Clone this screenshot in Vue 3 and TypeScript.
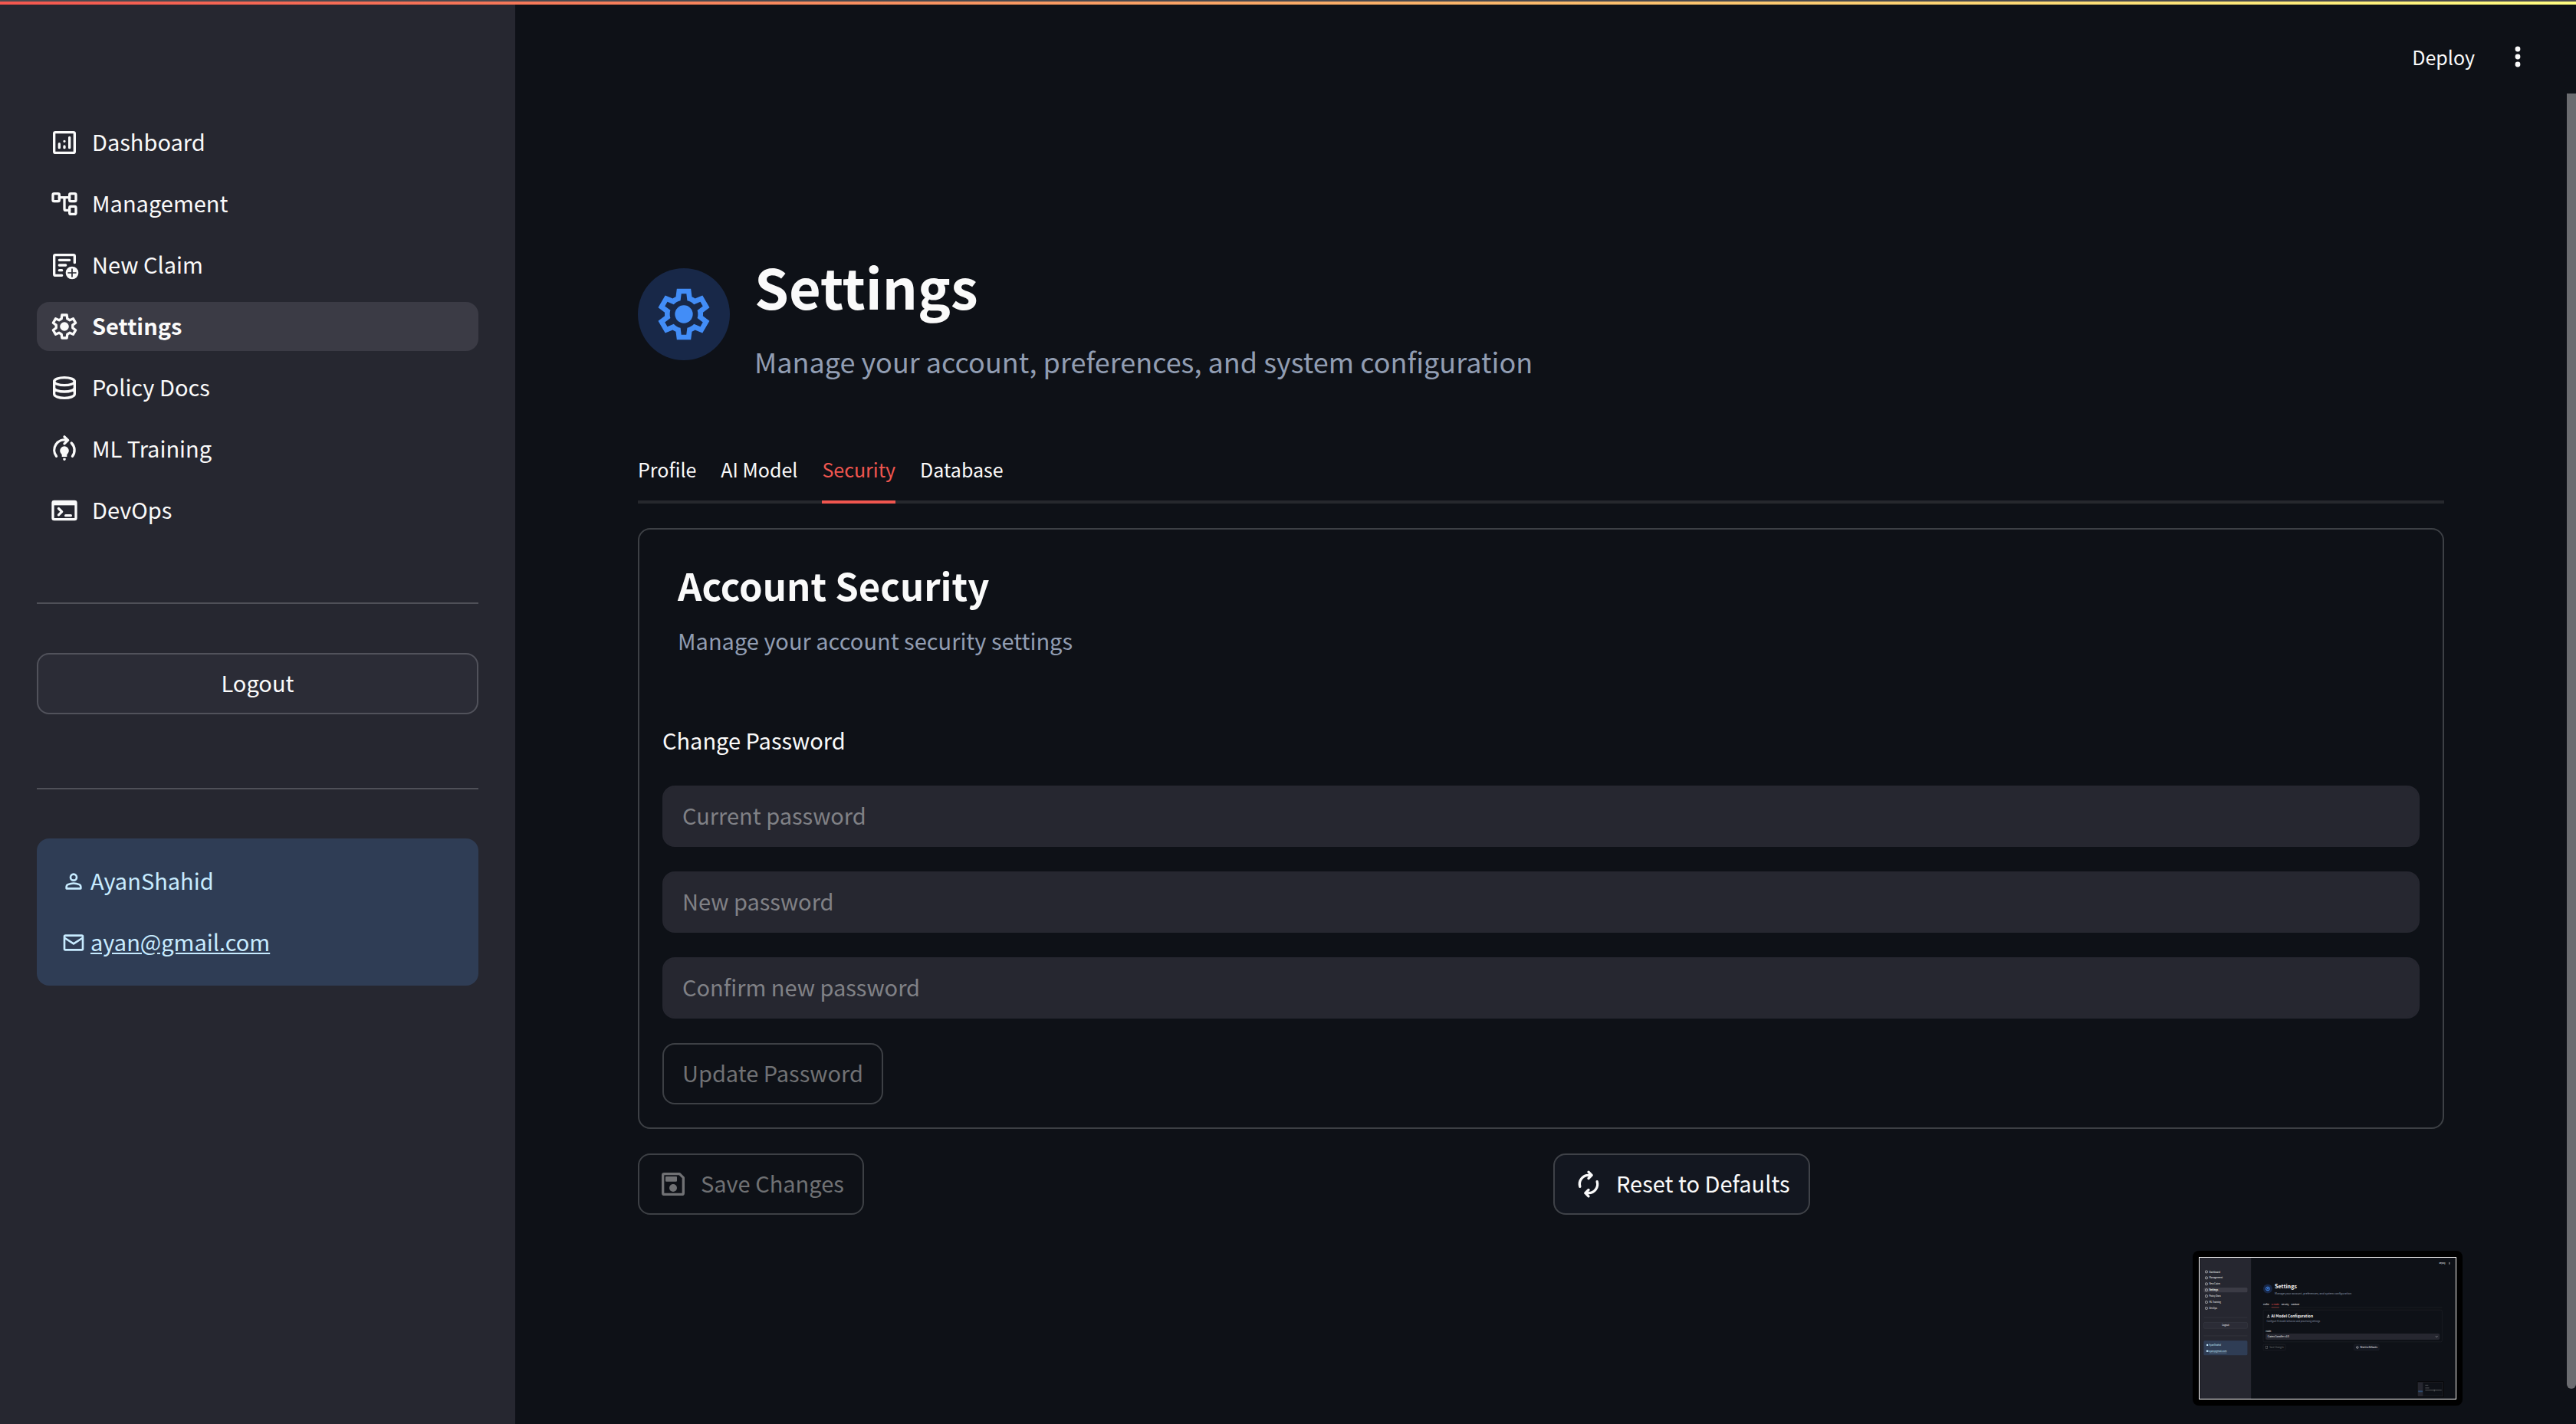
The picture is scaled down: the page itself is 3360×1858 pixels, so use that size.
<script setup lang="ts">
import { ref } from 'vue'

interface NavItem {
  label: string
  icon: string
}

const navItems: NavItem[] = [
  { label: 'Dashboard', icon: 'dashboard' },
  { label: 'Management', icon: 'tree' },
  { label: 'New Claim', icon: 'claim' },
  { label: 'Settings', icon: 'settings' },
  { label: 'Policy Docs', icon: 'database' },
  { label: 'ML Training', icon: 'training' },
  { label: 'DevOps', icon: 'terminal' },
]
const activePage = ref('Settings')

const tabs = ['Profile', 'AI Model', 'Security', 'Database']
const activeTab = ref('Security')

const currentPassword = ref('')
const newPassword = ref('')
const confirmPassword = ref('')
</script>

<template>
  <div class="app">
    <div class="decoration"></div>
    <div class="body">
      <aside class="sidebar">
        <nav class="nav" aria-label="Pages">
          <a
            v-for="item in navItems"
            :key="item.label"
            href="#"
            class="nav-link"
            :class="{ active: item.label === activePage }"
            @click.prevent="activePage = item.label"
          >
            <svg class="icon" viewBox="0 0 24 24" aria-hidden="true">
              <g v-if="item.icon === 'dashboard'">
                <rect x="4" y="4" width="16" height="16" rx="1" />
                <path d="M8 13v3M12 15v1M16 8v8M12 11v0" />
              </g>
              <g v-else-if="item.icon === 'tree'">
                <rect x="3" y="4" width="5" height="6" rx="1" />
                <rect x="16" y="4" width="5" height="6" rx="1" />
                <rect x="16" y="14" width="5" height="6" rx="1" />
                <path d="M8 7h8M12 7v9a1 1 0 0 0 1 1h3" />
              </g>
              <g v-else-if="item.icon === 'claim'">
                <path d="M10 20H5a1 1 0 0 1-1-1V5a1 1 0 0 1 1-1h14a1 1 0 0 1 1 1v5M8 8h8M8 12h5M8 16h2" />
                <circle class="solid" cx="18" cy="18" r="5" />
                <path class="cut" d="M18 15v6M15 18h6" />
              </g>
              <g v-else-if="item.icon === 'settings'">
                <path
                  d="M10.1 3h3.8l.4 2.95 1.9 1.1 2.7-1.15 1.9 3.25-2.35 1.75v2.2l2.35 1.75-1.9 3.25-2.7-1.15-1.9 1.1-.4 2.95h-3.8l-.4-2.95-1.9-1.1-2.7 1.15-1.9-3.25 2.35-1.75v-2.2L3.2 9.15 5.1 5.9l2.7 1.15 1.9-1.1z"
                />
                <circle class="solid" cx="12" cy="12" r="3.5" />
              </g>
              <g v-else-if="item.icon === 'database'">
                <ellipse cx="12" cy="7" rx="8" ry="3" />
                <path d="M4 7v10c0 1.7 3.6 3 8 3s8-1.3 8-3V7M4 12c0 1.7 3.6 3 8 3s8-1.3 8-3" />
              </g>
              <g v-else-if="item.icon === 'training'">
                <path d="M5.7 17.6A8 8 0 0 1 14 5M17.5 7.2a8 8 0 0 1 .8 10.4" />
                <path d="M12 2.3l2.8 2.7L12 7.7" />
                <path class="solid" d="M12 9.7a3.5 3.5 0 0 1 3.5 3.5c0 1.6-1 2.3-1.5 3.2V18h-4v-1.6c-.5-.9-1.5-1.6-1.5-3.2A3.5 3.5 0 0 1 12 9.7z" />
                <path class="solid" d="M11 19h2v1a1 1 0 0 1-2 0z" />
              </g>
              <g v-else>
                <rect x="3" y="5" width="18" height="14" rx="1" />
                <path class="solid" d="M3 5h18v3H3z" />
                <path d="M7.5 10.5L10 13l-2.500 2.500M13 16h4" />
              </g>
            </svg>
            <span class="label">{{ item.label }}</span>
          </a>
        </nav>

        <hr class="rule" />
        <button type="button" class="btn logout"><span class="label">Logout</span></button>
        <hr class="rule second" />

        <section class="user-card">
          <p class="user-line">
            <svg class="icon small" viewBox="0 0 24 24" aria-hidden="true">
              <circle cx="12" cy="8" r="3" />
              <path d="M5 19v-1.8c0-1 .5-1.7 1.4-2.1 3.600-1.600 7.600-1.600 11.200 0 .9.4 1.4 1.1 1.4 2.1V19z" />
            </svg>
            <span class="label">AyanShahid</span>
          </p>
          <p class="user-line">
            <svg class="icon small" viewBox="0 0 24 24" aria-hidden="true">
              <rect x="3" y="5" width="18" height="14" rx="1" />
              <path d="M3.5 7.5L12 13l8.500-5.500" />
            </svg>
            <a class="label" href="mailto:ayan@gmail.com">ayan@gmail.com</a>
          </p>
        </section>
      </aside>

      <main class="main">
        <header class="toolbar">
          <button type="button" class="deploy">Deploy</button>
          <button type="button" class="menu" aria-label="Main menu">
            <svg viewBox="0 0 8 28" aria-hidden="true">
              <circle cx="4" cy="4" r="3.4" />
              <circle cx="4" cy="14" r="3.4" />
              <circle cx="4" cy="24" r="3.4" />
            </svg>
          </button>
        </header>

        <div class="content">
          <div class="hero">
            <div class="hero-badge">
              <svg viewBox="0 0 24 24" aria-hidden="true">
                <path
                  d="m9.250 22-.4-3.200q-.325-.125-.612-.3-.288-.175-.563-.375L4.700 19.375l-2.750-4.750 2.575-1.950Q4.500 12.500 4.500 12.337v-.675q0-.162.025-.337L1.950 9.375l2.750-4.750 2.975 1.250q.275-.2.575-.375.3-.175.6-.3l.4-3.200h5.500l.4 3.200q.325.125.613.3.287.175.562.375l2.975-1.250 2.750 4.750-2.575 1.950q.025.175.025.337v.675q0 .163-.05.338l2.575 1.950-2.750 4.750-2.950-1.250q-.275.2-.575.375-.3.175-.6.3l-.4 3.200ZM11 20h1.975l.35-2.650q.775-.2 1.438-.588.662-.387 1.212-.937l2.475 1.025.975-1.700-2.150-1.625q.125-.35.175-.738.05-.387.05-.787 0-.4-.05-.787-.05-.388-.175-.738l2.150-1.625-.975-1.700-2.475 1.050q-.55-.575-1.212-.963-.663-.387-1.438-.587L13 4h-1.975l-.35 2.650q-.775.2-1.437.587-.663.388-1.213.938L5.550 7.150l-.975 1.700 2.150 1.600q-.125.375-.175.750-.05.375-.05.8 0 .4.05.775.05.375.175.75l-2.150 1.625.975 1.700 2.475-1.050q.55.575 1.213.963.662.387 1.437.587Z"
                />
                <circle cx="12" cy="12" r="3.5" />
              </svg>
            </div>
            <div>
              <h1>Settings</h1>
              <p class="hero-sub">Manage your account, preferences, and system configuration</p>
            </div>
          </div>

          <div class="tabs" role="tablist">
            <button
              v-for="tab in tabs"
              :key="tab"
              type="button"
              role="tab"
              class="tab"
              :class="{ selected: tab === activeTab }"
              :aria-selected="tab === activeTab"
              @click="activeTab = tab"
            >
              {{ tab }}
            </button>
          </div>

          <section class="panel">
            <div class="panel-head">
              <h2>Account Security</h2>
              <p>Manage your account security settings</p>
            </div>
            <form class="form" @submit.prevent>
              <h3>Change Password</h3>
              <input v-model="currentPassword" type="password" placeholder="Current password" aria-label="Current password" />
              <input v-model="newPassword" type="password" placeholder="New password" aria-label="New password" />
              <input v-model="confirmPassword" type="password" placeholder="Confirm new password" aria-label="Confirm new password" />
              <button type="submit" class="btn" disabled><span class="label">Update Password</span></button>
            </form>
          </section>

          <div class="actions">
            <div>
              <button type="button" class="btn" disabled>
                <svg class="icon" viewBox="0 0 24 24" aria-hidden="true">
                  <path d="M4 5a1 1 0 0 1 1-1h12l3 3v12a1 1 0 0 1-1 1H5a1 1 0 0 1-1-1z" />
                  <rect class="solid" x="6" y="6" width="9" height="4" rx=".5" />
                  <circle class="solid" cx="12" cy="15" r="3" />
                </svg>
                <span class="label">Save Changes</span>
              </button>
            </div>
            <div>
              <button type="button" class="btn">
                <svg class="icon" viewBox="0 0 24 24" aria-hidden="true">
                  <path d="M5.3 14A7 7 0 0 1 12 5h2.500M12 2.500L14.500 5 12 7.500" />
                  <path d="M18.7 10A7 7 0 0 1 12 19H9.500M12 16.500L9.500 19l2.500 2.500" />
                </svg>
                <span class="label">Reset to Defaults</span>
              </button>
            </div>
          </div>
        </div>
      </main>

      <div class="scroll-track"><div class="scroll-thumb"></div></div>
    </div>

    <figure class="preview">
      <svg viewBox="0 0 3360 1858" aria-label="AI Model settings preview">
        <rect width="3360" height="1858" fill="#0e1117" />
        <rect width="672" height="1858" fill="#262730" />
        <rect x="48" y="394" width="576" height="64" rx="16" fill="#3b3b45" />
        <g v-for="(item, i) in navItems" :key="item.label">
          <rect x="70" :y="172 + i * 80" width="28" height="28" rx="6" fill="none" stroke="#d0d0d2" stroke-width="7" />
          <text x="120" :y="197 + i * 80" :font-weight="i === 3 ? 700 : 400">{{ item.label }}</text>
        </g>
        <path d="M48 787h576M48 1029h576" stroke="#3a3b44" stroke-width="6" />
        <rect x="48" y="852" width="576" height="80" rx="16" fill="#2b2c36" stroke="#3e3f48" stroke-width="5" />
        <text x="336" y="903" text-anchor="middle">Logout</text>
        <rect x="48" y="1094" width="576" height="192" rx="16" fill="#2f3d55" />
        <g class="preview-user">
          <circle cx="96" cy="1150" r="12" />
          <rect x="83" y="1220" width="26" height="20" />
          <text x="118" y="1161">AyanShahid</text>
          <text x="118" y="1241" text-decoration="underline">ayan@gmail.com</text>
        </g>
        <text x="3148" y="84" font-size="25">Deploy</text>
        <path d="M3284 60v28" stroke="#fafafa" stroke-width="7" />
        <circle cx="892" cy="409" r="60" fill="#182848" />
        <circle cx="892" cy="409" r="24" fill="none" stroke="#428df7" stroke-width="10" />
        <circle cx="892" cy="409" r="10" fill="#428df7" />
        <text x="984" y="405" font-size="72" font-weight="700">Settings</text>
        <text x="984" y="486" font-size="36" class="muted">Manage your account, preferences, and system configuration</text>
        <g font-size="25">
          <text x="832" y="623">Profile</text>
          <text x="940" y="623" class="red">AI Model</text>
          <text x="1072" y="623">Security</text>
          <text x="1200" y="623">Database</text>
        </g>
        <path d="M832 655h2356" stroke="#26282d" stroke-width="5" />
        <path d="M940 655h102" stroke="#f0564f" stroke-width="5" />
        <rect x="832" y="689" width="2356" height="420" rx="16" fill="none" stroke="#25272c" stroke-width="5" />
        <path d="M890 765l10-10 10 10M900 755v24M880 783h40" fill="none" stroke="#fafafa" stroke-width="7" />
        <text x="938" y="788" font-size="49" font-weight="700">AI Model Configuration</text>
        <text x="876" y="847" class="muted">Configure AI model behavior and processing settings</text>
        <text x="864" y="976" font-size="25">Model</text>
        <rect x="864" y="1000" width="2292" height="80" rx="16" fill="#262730" />
        <text x="890" y="1051">Claims Classifier v2.0</text>
        <path d="M3104 1034l12 12 12-12" fill="none" stroke="#fafafa" stroke-width="5" />
        <rect x="832" y="1142" width="293" height="80" rx="16" fill="none" stroke="#25272c" stroke-width="5" />
        <rect x="864" y="1168" width="26" height="26" fill="none" stroke="#6d6e71" stroke-width="5" />
        <text x="914" y="1193" class="dim">Save Changes</text>
        <rect x="2026" y="1142" width="332" height="80" rx="16" fill="#131720" stroke="#25272c" stroke-width="5" />
        <circle cx="2072" cy="1182" r="13" fill="none" stroke="#fafafa" stroke-width="5" />
        <text x="2108" y="1193">Reset to Defaults</text>
        <rect x="2860" y="1632" width="352" height="202" rx="10" fill="#000" />
        <rect x="2870" y="1642" width="332" height="184" fill="#0e1117" stroke="#3a3b3f" stroke-width="4" />
        <rect x="2870" y="1642" width="66" height="184" fill="#262730" />
        <rect x="2874" y="1752" width="58" height="18" fill="#2f4d72" />
        <path d="M2966 1680h40M2966 1716h52M2966 1746h216M3086 1738v24" stroke="#6d6e71" stroke-width="7" />
      </svg>
    </figure>
  </div>
</template>

<style>
html,
body {
  background: #0e1117;
}
</style>

<style scoped>
.app,
.app * {
  box-sizing: border-box;
}

.app {
  position: relative;
  display: flex;
  flex-direction: column;
  min-height: 100vh;
  background: #0e1117;
  color: #fafafa;
  font-family: 'Noto Sans CJK SC', 'Noto Sans', sans-serif;
  font-size: 29px;
  line-height: 48px;
}

h1,
h2,
h3,
p,
figure {
  margin: 0;
}

button,
input {
  font: inherit;
  color: inherit;
}

.decoration {
  height: 6px;
  border-top: 2px solid #4a4a4f;
  background: linear-gradient(90deg, #f4574f, #fffd80) padding-box;
}

.body {
  flex: 1;
  display: flex;
}

/* Optical centring: the typeface sits low in its line box */
.label {
  padding-bottom: 4px;
}

/* Sidebar */
.sidebar {
  flex: none;
  width: 20%;
  padding: 148px 48px 48px;
  background: #262730;
}

.nav {
  display: flex;
  flex-direction: column;
  gap: 16px;
}

.nav-link {
  display: flex;
  align-items: center;
  gap: 16px;
  height: 64px;
  padding: 0 16px;
  border-radius: 16px;
  color: inherit;
  text-decoration: none;
}

.nav-link.active {
  background: #3b3b45;
  font-weight: 700;
}

.icon {
  flex: none;
  width: 40px;
  height: 40px;
  fill: none;
  stroke: currentColor;
  stroke-width: 2;
  stroke-linecap: round;
  stroke-linejoin: round;
}

.icon.small {
  width: 32px;
  height: 32px;
}

.icon .solid {
  fill: currentColor;
  stroke: none;
}

.icon .cut {
  stroke: #262730;
  stroke-width: 1;
}

.rule {
  height: 2px;
  margin: 88px 0 64px;
  border: 0;
  background: #4f5058;
}

.rule.second {
  margin-top: 96px;
}

.btn {
  display: inline-flex;
  align-items: center;
  justify-content: center;
  gap: 16px;
  height: 80px;
  padding: 0 24px;
  border: 2px solid #3f4248;
  border-radius: 16px;
  background: #131720;
  white-space: nowrap;
}

.btn:disabled {
  background: transparent;
  border-color: #3d4045;
  color: #707174;
}

.btn.logout {
  width: 100%;
  background: #2b2c36;
  border-color: #51525b;
}

.user-card {
  display: flex;
  flex-direction: column;
  gap: 32px;
  padding: 32px;
  border-radius: 16px;
  background: #2f3d55;
  color: #c7ebff;
}

.user-line {
  display: flex;
  align-items: center;
  gap: 6px;
  height: 48px;
}

.user-line a {
  color: inherit;
  text-decoration: underline;
}

/* Main column */
.main {
  flex: 1;
  min-width: 0;
}

.toolbar {
  display: flex;
  align-items: center;
  justify-content: flex-end;
  gap: 52px;
  height: 136px;
  padding-right: 60px;
}

.deploy,
.menu {
  display: flex;
  padding: 0;
  border: 0;
  background: none;
}

.deploy {
  font-size: 25px;
  line-height: 40px;
}

.menu svg {
  width: 8px;
  height: 28px;
  fill: currentColor;
}

.content {
  padding: 183px 160px 64px;
}

.hero {
  display: flex;
  align-items: center;
  gap: 32px;
}

.hero-badge {
  flex: none;
  display: flex;
  align-items: center;
  justify-content: center;
  width: 120px;
  height: 120px;
  border-radius: 50%;
  background: #182848;
}

.hero-badge svg {
  width: 80px;
  height: 80px;
  fill: #428df7;
}

h1 {
  font-size: 72px;
  line-height: 96px;
  font-weight: 700;
}

.hero-sub {
  margin-top: 26px;
  font-size: 36px;
  color: #919db2;
}

.tabs {
  display: flex;
  gap: 32px;
  margin-top: 76px;
  border-bottom: 4px solid #26282d;
}

.tab {
  height: 86px;
  margin-bottom: -4px;
  padding: 0;
  border: 0;
  border-bottom: 4px solid transparent;
  background: none;
  font-size: 25px;
  line-height: 40px;
}

.tab.selected {
  border-bottom-color: #f0564f;
  color: #f0564f;
}

.panel {
  margin-top: 32px;
  padding: 30px;
  border: 2px solid #3d4045;
  border-radius: 16px;
}

.panel-head {
  padding: 10px 20px 0;
}

h2 {
  font-size: 49px;
  line-height: 64px;
  font-weight: 700;
}

.panel-head p {
  margin-top: 16px;
  color: #919db2;
}

.form {
  display: flex;
  flex-direction: column;
  align-items: flex-start;
  gap: 32px;
  margin-top: 82px;
}

h3 {
  margin-bottom: 4px;
  font-size: 29px;
  font-weight: 400;
}

.form input {
  width: 100%;
  height: 80px;
  padding: 0 24px 4px;
  border: 2px solid #262730;
  border-radius: 16px;
  outline: 0;
  background: #262730;
}

.form input::placeholder {
  color: #808186;
  opacity: 1;
}

.actions {
  display: grid;
  grid-template-columns: 1fr 1fr;
  gap: 32px;
  margin-top: 32px;
}

.scroll-track {
  flex: none;
  display: flex;
  width: 12px;
  padding: 116px 0 46px;
}

.scroll-thumb {
  flex: 1;
  border-radius: 0 0 6px 6px;
  background: #6b6c70;
}

/* Floating picture-in-picture preview */
.preview {
  position: absolute;
  right: 148px;
  bottom: 24px;
  padding: 8px;
  border-radius: 8px;
  background: #000;
}

.preview svg {
  display: block;
  width: 336px;
  height: 186px;
  border: 1px solid #fff;
  fill: #fafafa;
}

.preview .muted {
  fill: #919db2;
}

.preview .red {
  fill: #f0564f;
}

.preview .dim {
  fill: #6c6e71;
}

.preview-user {
  fill: #c7ebff;
}
</style>
